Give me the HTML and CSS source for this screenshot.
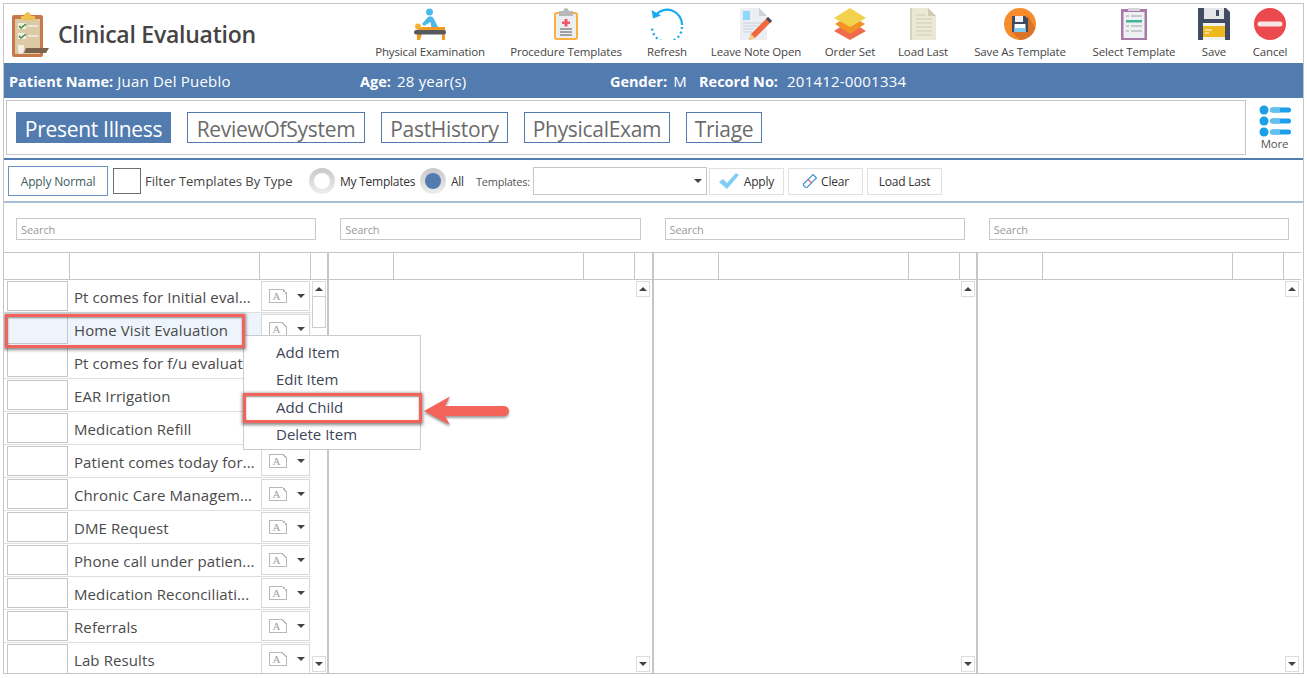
FILE: index.html
```html
<!DOCTYPE html>
<html lang="en">
<head>
<meta charset="utf-8">
<title>Clinical Evaluation</title>
<link rel="stylesheet" href="styles.css">
</head>
<body>
<main class="page">
  <header class="app-head">
    <div class="title-wrap">
      <svg class="logo" viewBox="0 0 38 45">
        <rect x="0" y="3" width="31" height="42" rx="2" fill="#c9784a"/>
        <rect x="3" y="7" width="25" height="35" fill="#dcc9a6"/>
        <path d="M9 4H12Q12 1 16 0Q19 1 19 4H23V8H9Z" fill="#efc24f"/>
        <rect x="6" y="11" width="8" height="6" fill="#f2efe6"/>
        <rect x="6" y="21" width="8" height="6" fill="#f2efe6"/>
        <path d="M7 14L9 16L14 12M7 24L9 26L14 22" fill="none" stroke="#3e8a3c" stroke-width="1.500"/>
        <path d="M16 14H26M16 24H26" stroke="#f2efe6" stroke-width="1.500"/>
        <path d="M6 33H12V38Q11 42 8 42Q6 41 6 38Z" fill="#f2efe6"/>
        <path d="M14 36H37L34 41H12Z" fill="#7b6248"/>
      </svg>
      <h1 class="title">Clinical Evaluation</h1>
    </div>
    <nav class="actions">
      <a class="action">
        <svg class="icon" viewBox="0 0 32 32">
          <circle cx="15.500" cy="4" r="3.500" fill="#4bb9ea"/>
          <path d="M8 16L14 9Q18 7 20 11L26 23H18L16.500 14L10 18Z" fill="#4bb9ea"/>
          <circle cx="4" cy="18.500" r="3" fill="#f9b234"/>
          <path d="M3 22V32H6L8 26H28V32H31V19H8Z" fill="#f39a1f"/>
          <rect y="22" width="32" height="4.500" rx="2.200" fill="#57595f"/>
        </svg>
        <span>Physical Examination</span>
      </a>
      <a class="action">
        <svg class="icon" viewBox="0 0 24 32">
          <rect x="1" y="5" width="22" height="26" rx="2" fill="#eceff1" stroke="#fbb040" stroke-width="2"/>
          <path d="M5 3H9Q10 0 12 0Q14 0 15 3H19V8H5Z" fill="#b9b9b9"/>
          <path d="M10.500 11H13.500V13.500H16V16H13.500V18.500H10.500V16H8V13.500H10.500Z" fill="#ef5a6a"/>
          <path d="M6 21H18M6 24H18M6 27H18" stroke="#555" stroke-width="1"/>
        </svg>
        <span>Procedure Templates</span>
      </a>
      <a class="action">
        <svg class="icon" viewBox="0 0 34 32">
          <path d="M6 6.500A15 15 0 0 1 32 17" fill="none" stroke="#18aaf0" stroke-width="2.200"/>
          <path d="M1.500 2L3 10.500L11 7.500Z" fill="#18aaf0"/>
          <path d="M32 19A15 15 0 0 1 2 19" fill="none" stroke="#18aaf0" stroke-width="2.400" stroke-dasharray="2 2.800"/>
        </svg>
        <span>Refresh</span>
      </a>
      <a class="action">
        <svg class="icon" viewBox="0 0 32 32">
          <path d="M0 0H19L27 8V32H0Z" fill="#ebeff3"/>
          <path d="M19 0L27 8H19Z" fill="#cdd3da"/>
          <rect x="3" y="3" width="7" height="9" fill="#8ed8fa"/>
          <path d="M3 15H22M3 18H18M3 21H14M3 24H12" stroke="#cbd2d9" stroke-width="1.200"/>
          <path d="M28 9L32 13L15 30L9 32L11 26Z" fill="#f1673e"/>
          <path d="M11 26L15 30L9 32Z" fill="#f8cf87"/>
          <path d="M28 9L32 13L30 15L26 11Z" fill="#3f4a5c"/>
        </svg>
        <span>Leave Note Open</span>
      </a>
      <a class="action">
        <svg class="icon" viewBox="0 0 32 32">
          <path d="M16 13L32 23L16 32L0 23Z" fill="#ef6b4d"/>
          <path d="M16 7L31 16L16 26L1 16Z" fill="#f39325"/>
          <path d="M16 0L32 10L16 19L0 10Z" fill="#f2d24c"/>
        </svg>
        <span>Order Set</span>
      </a>
      <a class="action">
        <svg class="icon" viewBox="0 0 26 32">
          <rect width="2" height="32" fill="#d6d2bd"/>
          <path d="M2 0H18L26 8V32H2Z" fill="#ece8d4"/>
          <path d="M18 0L26 8H18Z" fill="#cfcbb6"/>
          <path d="M6 7H15M6 11H22M6 15H22M6 19H22M6 23H22M6 27H22" stroke="#cfcbb6" stroke-width="1"/>
        </svg>
        <span>Load Last</span>
      </a>
      <a class="action">
        <svg class="icon" viewBox="0 0 32 32">
          <circle cx="16" cy="16" r="16" fill="#f68b2c"/>
          <path d="M24 8L31 20A16 16 0 0 1 16 32L8 24Z" fill="#d9722a"/>
          <path d="M8 8H21L24 11V24H8Z" fill="#3f4a5f"/>
          <rect x="11" y="8" width="8" height="6" fill="#eef0f2"/>
          <rect x="10.500" y="16" width="11" height="8" fill="#fff"/>
          <rect x="10.500" y="20" width="11" height="4" fill="#7fcdee"/>
        </svg>
        <span>Save As Template</span>
      </a>
      <a class="action">
        <svg class="icon" viewBox="0 0 26 32">
          <rect y="1" width="26" height="31" fill="#a878a9"/>
          <rect x="2.500" y="4" width="21" height="26" fill="#eef0f1"/>
          <rect x="7" y="0" width="12" height="3" fill="#d9d3da"/>
          <path d="M5 8H8M10 8H21M5 13H8M5 18H8M10 18H21M5 23H8M10 23H21" stroke="#c5c9cc" stroke-width="2"/>
          <rect x="5" y="12" width="16" height="2.500" fill="#3fb59c"/>
        </svg>
        <span>Select Template</span>
      </a>
      <a class="action">
        <svg class="icon" viewBox="0 0 32 32">
          <path d="M0 0H28L32 4V32H0Z" fill="#414b63"/>
          <rect x="6" y="0" width="20" height="11" fill="#e4e6e8"/>
          <rect x="18" y="2" width="3" height="6" fill="#414b63"/>
          <rect x="5" y="15" width="22" height="17" fill="#f1f1ef"/>
          <rect x="5" y="18" width="22" height="11" fill="#edb91f"/>
          <path d="M7 22H14M7 25H11" stroke="#fff" stroke-width="1.200"/>
        </svg>
        <span>Save</span>
      </a>
      <a class="action">
        <svg class="icon" viewBox="0 0 32 32">
          <circle cx="16" cy="16" r="16" fill="#ea4a4e"/>
          <rect x="3.500" y="13.500" width="25" height="5" rx="2.500" fill="#fbe4e4"/>
        </svg>
        <span>Cancel</span>
      </a>
    </nav>
  </header>

  <section class="patient">
    <div class="field field-name"><b>Patient Name:</b> Juan Del Pueblo</div>
    <div class="field field-age"><b>Age:</b> 28 year(s)</div>
    <div class="field field-gender"><b>Gender:</b> M</div>
    <div class="field field-record"><b>Record No:</b> 201412-0001334</div>
  </section>

  <section class="tabs-row">
    <div class="tabs">
      <a class="tab tab-active">Present Illness</a>
      <a class="tab">ReviewOfSystem</a>
      <a class="tab">PastHistory</a>
      <a class="tab">PhysicalExam</a>
      <a class="tab">Triage</a>
    </div>
    <a class="more">
      <svg class="more-icon" viewBox="0 0 32 32">
        <circle cx="5" cy="5" r="4.500" fill="#1a9fe8"/><circle cx="5" cy="16" r="4.500" fill="#1a9fe8"/><circle cx="5" cy="27" r="4.500" fill="#1a9fe8"/>
        <rect x="11" y="2.500" width="21" height="5" rx="2.500" fill="#1a9fe8"/><rect x="11" y="13.500" width="21" height="5" rx="2.500" fill="#1a9fe8"/><rect x="11" y="24.500" width="21" height="5" rx="2.500" fill="#1a9fe8"/>
        <path d="M13.500 2.500H21V7.500H13.500A2.500 2.500 0 0 1 13.500 2.500ZM13.500 13.500H21V18.500H13.500A2.500 2.500 0 0 1 13.500 13.500ZM13.500 24.500H21V29.500H13.500A2.500 2.500 0 0 1 13.500 24.500Z" fill="#61c0f0"/>
      </svg>
      <span>More</span>
    </a>
  </section>

  <section class="filter-bar">
    <button class="btn-normal">Apply Normal</button>
    <span class="check"></span>
    <span class="filter-label">Filter Templates By Type</span>
    <span class="radio"></span>
    <span class="radio-label label-my">My Templates</span>
    <span class="radio radio-on"></span>
    <span class="radio-label label-all">All</span>
    <span class="tpl-label">Templates:</span>
    <span class="select"><i class="caret"></i></span>
    <button class="btn btn-apply">
      <svg class="btn-icon" viewBox="0 0 20 16"><path d="M0 9L4 6L8 10L17 0L20 2L8 16Z" fill="#7fcdf7"/></svg>Apply
    </button>
    <button class="btn btn-clear">
      <svg class="btn-icon-s" viewBox="0 0 16 16"><path d="M11 1.500L14.500 5L5 14.500H3.500L1.500 12.500V11Z" fill="#fff" stroke="#3f93d8" stroke-width="1.200"/><path d="M6 6.500L9.500 10" stroke="#ef5a7a" stroke-width="1.200"/></svg>Clear
    </button>
    <button class="btn btn-last">Load Last</button>
  </section>

  <section class="search-row">
    <div class="search-cell"><input class="search" placeholder="Search"></div>
    <div class="search-cell"><input class="search" placeholder="Search"></div>
    <div class="search-cell"><input class="search" placeholder="Search"></div>
    <div class="search-cell"><input class="search" placeholder="Search"></div>
  </section>

  <section class="grid">
    <div class="col">
      <div class="col-head"><i></i><i></i><i></i><i></i></div>
      <div class="col-body">
        <div class="rows">
          <div class="row"><span class="box"></span><span class="name">Pt comes for Initial eval...</span><span class="drop"><span class="doc">A</span><i class="caret"></i></span></div>
          <div class="row row-hot"><span class="box"></span><span class="name">Home Visit Evaluation</span><span class="drop"><span class="doc">A</span><i class="caret"></i></span></div>
          <div class="row"><span class="box"></span><span class="name">Pt comes for f/u evaluat</span><span class="drop"><span class="doc">A</span><i class="caret"></i></span></div>
          <div class="row"><span class="box"></span><span class="name">EAR Irrigation</span><span class="drop"><span class="doc">A</span><i class="caret"></i></span></div>
          <div class="row"><span class="box"></span><span class="name">Medication Refill</span><span class="drop"><span class="doc">A</span><i class="caret"></i></span></div>
          <div class="row"><span class="box"></span><span class="name">Patient comes today for...</span><span class="drop"><span class="doc">A</span><i class="caret"></i></span></div>
          <div class="row"><span class="box"></span><span class="name">Chronic Care Managem...</span><span class="drop"><span class="doc">A</span><i class="caret"></i></span></div>
          <div class="row"><span class="box"></span><span class="name">DME Request</span><span class="drop"><span class="doc">A</span><i class="caret"></i></span></div>
          <div class="row"><span class="box"></span><span class="name">Phone call under patien...</span><span class="drop"><span class="doc">A</span><i class="caret"></i></span></div>
          <div class="row"><span class="box"></span><span class="name">Medication Reconciliati...</span><span class="drop"><span class="doc">A</span><i class="caret"></i></span></div>
          <div class="row"><span class="box"></span><span class="name">Referrals</span><span class="drop"><span class="doc">A</span><i class="caret"></i></span></div>
          <div class="row"><span class="box"></span><span class="name">Lab Results</span><span class="drop"><span class="doc">A</span><i class="caret"></i></span></div>
        </div>
        <div class="scroll">
          <span class="scroll-btn"><i class="caret caret-up"></i></span>
          <span class="thumb"></span>
          <span class="scroll-btn scroll-down"><i class="caret"></i></span>
        </div>
      </div>
    </div>
    <div class="col">
      <div class="col-head"><i></i><i></i><i></i><i></i></div>
      <div class="col-body"><div class="rows"></div><div class="scroll"><span class="scroll-btn"><i class="caret caret-up"></i></span><span class="scroll-btn scroll-down"><i class="caret"></i></span></div></div>
    </div>
    <div class="col">
      <div class="col-head"><i></i><i></i><i></i><i></i></div>
      <div class="col-body"><div class="rows"></div><div class="scroll"><span class="scroll-btn"><i class="caret caret-up"></i></span><span class="scroll-btn scroll-down"><i class="caret"></i></span></div></div>
    </div>
    <div class="col col-last">
      <div class="col-head"><i></i><i></i><i></i><i></i></div>
      <div class="col-body"><div class="rows"></div><div class="scroll"><span class="scroll-btn"><i class="caret caret-up"></i></span><span class="scroll-btn scroll-down"><i class="caret"></i></span></div></div>
    </div>
  </section>

  <div class="menu">
    <div class="menu-item">Add Item</div>
    <div class="menu-item">Edit Item</div>
    <div class="menu-item">Add Child</div>
    <div class="menu-item">Delete Item</div>
  </div>
  <div class="mark mark-row"></div>
  <div class="mark mark-item"></div>
  <svg class="arrow" viewBox="0 0 88 36">
    <path d="M1 18L27 3.500L22 13H81A5 5 0 0 1 81 23H22L27 32Z" fill="#f4635a"/>
  </svg>
</main>
</body>
</html>
```

FILE: styles.css
```css
* { box-sizing: border-box; }
html, body { margin: 0; padding: 0; background: #fff; }
body {
  font-family: "Open Sans", "Noto Sans", sans-serif;
  color: #444;
  width: 1307px;
  height: 678px;
  overflow: hidden;
}
.page {
  position: relative;
  margin: 3px 0 0 3px;
  width: 1301px;
  height: 671px;
  border: 1px solid #c6c6c6;
  display: flex;
  flex-direction: column;
  overflow: hidden;
}
.app-head { height: 59px; display: flex; flex: none; }
.title-wrap { flex: 1; display: flex; align-items: flex-start; padding: 8px 0 0 8px; }
.logo { width: 38px; height: 45px; flex: none; }
.title { margin: 7px 0 0 8px; font-size: 23px; line-height: 30px; font-weight: 600; color: #444; letter-spacing: -.25px; white-space: nowrap; }
.actions {
  flex: none;
  display: grid;
  grid-template-columns: 132px 140px 62px 116px 72px 74px 120px 108px 52px 60px;
  margin-right: 3px;
}
.action { display: flex; flex-direction: column; align-items: center; padding-top: 4px; white-space: nowrap; font-size: 11.500px; line-height: 16px; color: #444; letter-spacing: -.15px; }
.icon { width: 34px; height: 32px; margin-bottom: 4px; flex: none; }
.patient {
  height: 35px;
  flex: none;
  background: #527bb0;
  color: #fff;
  display: flex;
  align-items: center;
  padding-left: 5px;
  font-size: 15px;
  letter-spacing: .2px;
  white-space: nowrap;
}
.patient b { font-weight: 700; font-size: 14.500px; letter-spacing: 0; margin-right: 2px; }
.field-name { width: 351px; }
.field-name b { margin-right: 0; }
.field-age { width: 250px; }
.field-gender { width: 89px; }
.field-record b { margin-right: 5px; }
.tabs-row { height: 60px; flex: none; padding: 2px 0 3px 2px; display: flex; }
.tabs {
  width: 1240px;
  border: 1px solid #c6c6c6;
  display: grid;
  grid-template-columns: 155px 178px 127px 146px 76px;
  justify-content: start;
  column-gap: 16px;
  align-items: center;
  padding-left: 9px;
}
.tab {
  height: 31px;
  border: 1px solid #527bb0;
  color: #6b6b6b;
  font-size: 21px;
  line-height: 32px;
  text-align: center;
  letter-spacing: -.3px;
  white-space: nowrap;
}
.tab-active { background: #527bb0; color: #fff; }
.more { flex: 1; display: flex; flex-direction: column; align-items: center; padding: 5px 0 0 0; font-size: 11.500px; line-height: 16px; color: #555; letter-spacing: -.2px; }
.more-icon { width: 32px; height: 32px; margin-bottom: -1px; }
.filter-bar {
  height: 45px;
  flex: none;
  border-top: 2px solid #527bb0;
  border-bottom: 2px solid #a9bfd8;
  display: flex;
  align-items: center;
  padding: 1px 0 0 4px;
  font-size: 13px;
  white-space: nowrap;
}
button { font-family: inherit; cursor: pointer; background: #fff; }
.btn-normal { width: 100px; height: 30px; border: 1px solid #6a94c4; color: #3e5c5c; font-size: 12px; letter-spacing: -.15px; padding: 0; }
.check { width: 28px; height: 26px; margin-left: 5px; border: 1px solid #6e6e6e; flex: none; }
.filter-label { width: 164px; margin-left: 4px; font-size: 13px; color: #444; }
.radio { width: 26px; height: 26px; border-radius: 50%; background: linear-gradient(#c8c8c8, #eee); display: flex; align-items: center; justify-content: center; flex: none; }
.radio::before { content: ""; width: 16px; height: 16px; border-radius: 50%; background: #fff; }
.radio-on::before { background: #527bb0; }
.radio-label { margin-left: 5px; font-size: 12px; letter-spacing: -.25px; color: #333; }
.label-my { width: 80px; }
.label-all { width: 25px; }
.tpl-label { width: 57px; font-size: 11px; color: #555; letter-spacing: -.25px; }
.select { width: 174px; height: 28px; border: 1px solid #c6c6c6; position: relative; flex: none; }
.select .caret { position: absolute; right: 4px; top: 11px; }
.caret { display: block; width: 0; height: 0; border: 4px solid transparent; border-top: 4px solid #444; border-bottom: 0; }
.caret-up { border-top: 0; border-bottom: 4px solid #444; }
.btn { height: 27px; border: 1px solid #e0e0e0; font-size: 12px; color: #333; letter-spacing: -.2px; padding: 0; display: flex; align-items: center; justify-content: center; flex: none; }
.btn-apply { width: 75px; margin-left: 2px; }
.btn-clear { width: 75px; margin-left: 4px; }
.btn-last { width: 75px; margin-left: 4px; }
.btn-icon { width: 20px; height: 16px; margin-right: 5px; }
.btn-icon-s { width: 16px; height: 16px; margin-right: 3px; }
.search-row { height: 49px; flex: none; display: grid; grid-template-columns: repeat(4, 324.250px); padding-top: 15px; }
.search-cell { padding: 0 12px; }
.search { display: block; width: 100%; height: 22px; border: 1px solid #c9c9c9; font: 11px "Open Sans", sans-serif; padding: 0 4px; letter-spacing: -.1px; outline: none; }
.search::placeholder { color: #999; opacity: 1; }
.grid { flex: 1; min-height: 0; display: grid; grid-template-columns: repeat(4, 324.250px) 1fr; }
.col { border-right: 1px solid #c6c6c6; box-shadow: 1px 0 0 #c6c6c6; display: flex; flex-direction: column; min-height: 0; overflow: hidden; }
.col-last { border-right: 0; box-shadow: none; }
.col-head { height: 28px; flex: none; display: grid; grid-template-columns: 66px 190px 51px 16px; border-top: 1px solid #c6c6c6; border-bottom: 1px solid #c6c6c6; }
.col-head i { border-right: 1px solid #c6c6c6; }
.col-head i:last-child { border-right: 0; }
.col-body { flex: 1; min-height: 0; display: flex; overflow: hidden; }
.rows { width: 307px; flex: none; }
.row { height: 33px; display: grid; grid-template-columns: 66px 190px 51px; border-bottom: 1px solid #dedede; }
.row-hot { background: #eef4fb; }
.box { margin: 1px 2px 1px 3px; border: 1px solid #c6c6c6; background: #fff; }
.row-hot .box { background: #eef4fb; }
.name { padding-left: 4px; font-size: 15px; line-height: 35px; color: #4a4a4a; letter-spacing: .1px; white-space: nowrap; overflow: hidden; }
.drop { margin: 1px; border: 1px solid #d8d8d8; background: #fff; display: flex; align-items: center; padding-left: 7px; }
.doc { position: relative; width: 18px; height: 14px; flex: none; border: 1px solid #b8b8b8; font: 11px/12px "Liberation Serif", serif; color: #a0a0a0; text-align: center; padding-right: 3px; }
.doc::after { content: ""; position: absolute; top: -1px; right: -1px; width: 5px; height: 5px; background: linear-gradient(to top right, #fff 40%, #b8b8b8 40%, #b8b8b8 60%, #fff 60%); }
.drop .caret { margin-left: 10px; }
.scroll { flex: 1; position: relative; display: flex; flex-direction: column; padding: 1px; }
.scroll-btn { height: 16px; width: 14px; border: 1px solid #ddd; display: flex; align-items: center; justify-content: center; flex: none; }
.scroll-down { position: absolute; bottom: 1px; left: 1px; }
.thumb { height: 32px; width: 14px; border: 1px solid #ccc; margin-top: -1px; }
.menu {
  position: absolute;
  left: 239px;
  top: 331px;
  width: 178px;
  height: 115px;
  background: #fff;
  border: 1px solid #ccc;
  padding-top: 3px;
}
.menu-item { height: 27.300px; line-height: 27px; padding-left: 32px; font-size: 15px; color: #3c4657; }
.mark { position: absolute; border: 3px solid #f4635a; box-shadow: 0 1px 3px 1px rgba(40, 40, 40, .55), inset 0 1px 2px rgba(40, 40, 40, .5); }
.mark-row { left: 1px; top: 310px; width: 240px; height: 34px; }
.mark-item { left: 239px; top: 389px; width: 179px; height: 30px; }
.arrow { position: absolute; left: 419px; top: 389px; width: 88px; height: 36px; filter: drop-shadow(0 2px 1px rgba(40, 40, 40, .45)); }
```
